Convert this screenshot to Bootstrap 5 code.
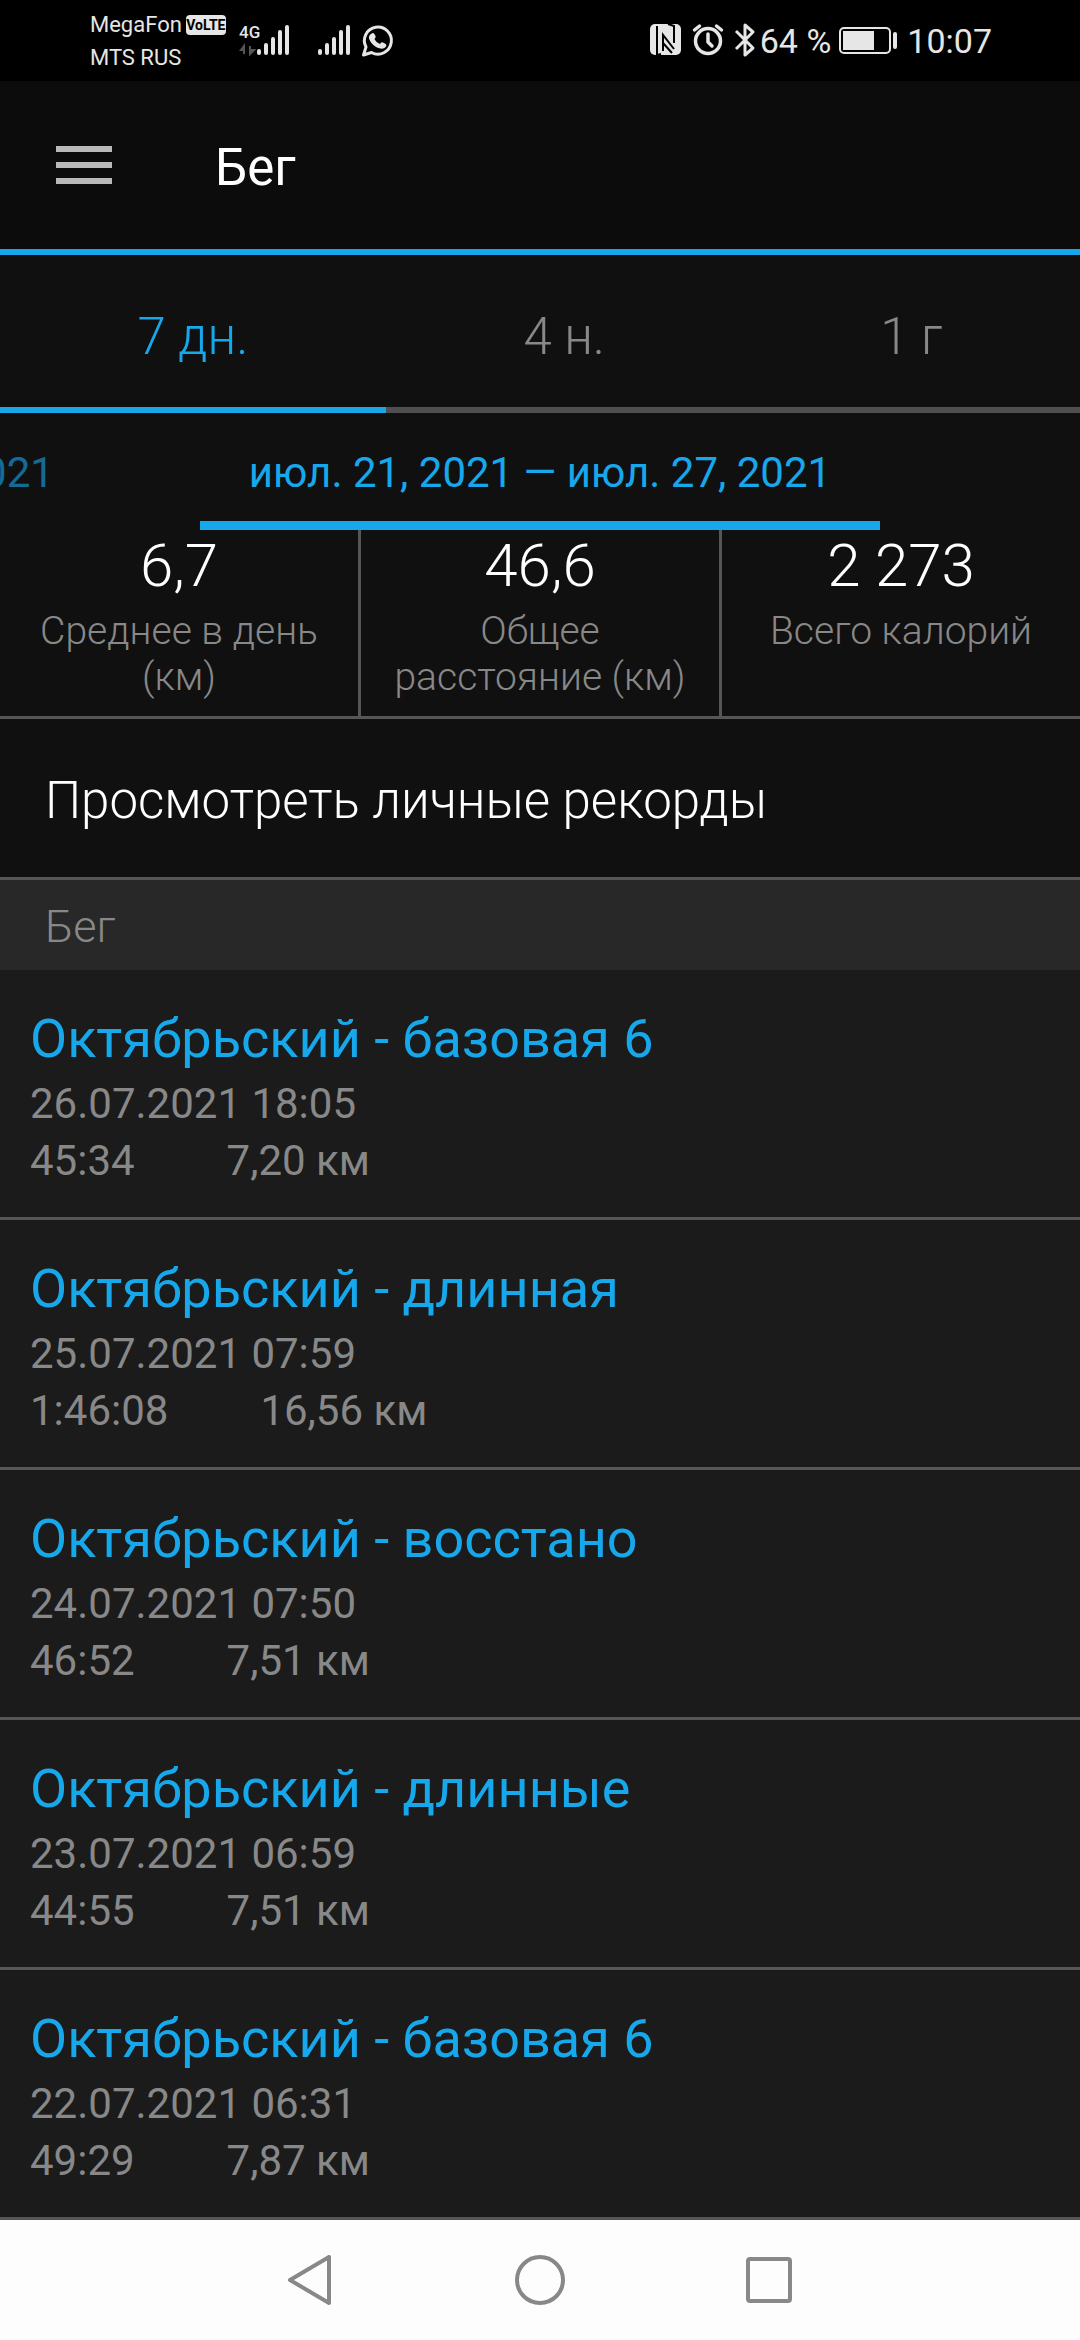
<!DOCTYPE html>
<html lang="ru">
<head>
<meta charset="utf-8">
<meta name="viewport" content="width=device-width, initial-scale=1">
<title>Бег</title>
<link href="https://cdn.jsdelivr.net/npm/bootstrap@5.3.0/dist/css/bootstrap.min.css" rel="stylesheet">
<style>
:root { --accent: #17a8ec; --rule: #565656; --muted: #888; }
body { font-family: Roboto, "Noto Sans", sans-serif; background: #101010; color: #fff; }
svg { display: block; flex: none; }
button { color: inherit; font: inherit; }
.status-bar { height: 81px; background: #000; color: #e6e6e6; }
.status-left { padding-left: 90px; }
.status-right { padding-right: 88px; }
.carriers { font-size: 22px; line-height: 33px; }
.status-num { font-size: 34px; line-height: 82px; }
.volte { background: #e6e6e6; color: #000; font-size: 14px; line-height: 20px; border-radius: 4px; width: 40px; font-weight: 700; }
.app-header { height: 174px; background: #0c0c0c; border-bottom: 6px solid var(--accent); padding-left: 56px; }
.app-title { font-size: 51px; line-height: 60px; font-weight: 400; margin-left: 103px; padding-top: 6px; }
.range-tab { font-weight: 300; font-size: 51px; line-height: 140px; padding: 12px 0 0; color: var(--muted); background: none; border: 0; border-bottom: 6px solid #4f4f4f; }
.range-tab.active { color: var(--accent); border-color: var(--accent); }
.period { font-size: 42px; color: var(--accent); line-height: 96px; white-space: nowrap; }
.period-side { flex: 1 1 0; min-width: 0; padding-top: 12px; }
.period-prev { opacity: .6; margin-right: 146px; }
.period-now { border-bottom: 9px solid var(--accent); padding: 12px 49px 0; }
.stats { border-bottom: 3px solid var(--rule); font-weight: 300; }
.stat { flex: 1 1 0; min-height: 186px; padding: 0 12px; }
.stat + .stat { border-left: 3px solid var(--rule); }
.stat-value { font-size: 60px; line-height: 72px; }
.stat-label { font-size: 39px; line-height: 46px; color: var(--muted); margin-top: 6px; }
.records { font-weight: 300; font-size: 51px; line-height: 152px; padding: 6px 45px 0; border-bottom: 3px solid var(--rule); color: #fff; }
.section-head { font-weight: 300; font-size: 45px; line-height: 86px; padding: 4px 45px 0; background: #282828; color: var(--muted); }
.run { background: #1b1b1b; color: var(--muted); border-bottom: 3px solid var(--rule); padding: 36px 30px 28px; font-size: 42px; line-height: 57px; }
.run-title { font-size: 54px; line-height: 66px; font-weight: 400; color: var(--accent); margin-bottom: 3px; }
.run-data { gap: 92px; }
.nav-keys { background: #fdfdfd; height: 120px; gap: 179px; }
</style>
</head>
<body>
<header class="status-bar d-flex justify-content-between">
  <div class="status-left d-flex">
    <div class="carriers pt-2">
      <div class="d-flex align-items-center"><span>MegaFon</span><span class="volte text-center ms-1">VoLTE</span></div>
      <div>MTS RUS</div>
    </div>
    <svg class="ms-2" width="170" height="81" viewBox="233 0 170 81" role="img" aria-label="Сигнал сети">
      <text x="238" y="38" font-size="17" font-weight="500" fill="#e6e6e6" font-family="Roboto, sans-serif">4G</text>
      <path d="M243 54V46l-3 4h3M249 46v8l4-4h-4" fill="#555" stroke="#555" stroke-width="2"/>
      <g stroke="#e6e6e6" stroke-width="4" stroke-linecap="round">
        <path d="M258 51v2M265 45v8M272 39v14M279 32v21M286 27v26"/>
        <path d="M319 51v2M326 45v8M333 39v14M340 32v21M347 27v26"/>
      </g>
      <path d="M362.500 55l2.500-8a13.500 13.500 0 1 1 5.500 5.500z" fill="none" stroke="#e6e6e6" stroke-width="3" stroke-linejoin="round"/>
      <path d="M370 34c2-2 3-1 4 1s1 2-.5 4c1 2 3 4 5.500 5 1.500-2 2-2 4-1s3 1.500 2 3.500c-2 3-6 2.500-9 1-4-2-7-6-8-9-.500-2 .5-3.500 2-4.500z" fill="#e6e6e6"/>
    </svg>
  </div>
  <div class="status-right d-flex align-items-center">
    <svg width="112" height="81" viewBox="648 0 112 81" role="img" aria-label="NFC, будильник, Bluetooth">
      <rect x="650" y="24" width="31" height="31" rx="5" fill="#e6e6e6"/>
      <path d="M657 26v29l4-1M663 51V35l11 14M663 43l9 10M668 24l6 2v17" stroke="#000" stroke-width="2" fill="none"/>
      <g fill="none" stroke="#e6e6e6" stroke-width="3.500" stroke-linecap="round">
        <circle cx="708" cy="41" r="12.500"/><path d="M708 34v8l4 4M694.500 30l5-4M721.500 30l-5-4"/>
      </g>
      <path d="M736 31l17 17-8 7V25l8 7-17 17" fill="none" stroke="#e6e6e6" stroke-width="3" stroke-linejoin="round"/>
    </svg>
    <span class="status-num">64 %</span>
    <svg class="ms-2 me-2" width="60" height="27" viewBox="0 0 60 27" role="img" aria-label="Батарея">
      <rect x="1" y="1" width="50" height="25" rx="4" fill="none" stroke="#e6e6e6" stroke-width="2"/>
      <rect x="4" y="4" width="31" height="19" fill="#e6e6e6"/><rect x="54" y="5" width="4" height="17" rx="2" fill="#e6e6e6"/>
    </svg>
    <span class="status-num">10:07</span>
  </div>
</header>

<div class="app-header d-flex align-items-center">
  <button class="btn p-0 border-0 rounded-0" type="button" aria-label="Меню">
    <svg width="56" height="38" viewBox="0 0 56 38" fill="#b9b9b9"><path d="M0 0h56v6H0zM0 16h56v6H0zM0 32h56v6H0z"/></svg>
  </button>
  <h1 class="app-title mb-0">Бег</h1>
</div>

<nav class="d-flex">
  <button class="range-tab active flex-fill" type="button">7 дн.</button>
  <button class="range-tab flex-fill" type="button">4 н.</button>
  <button class="range-tab flex-fill" type="button">1 г</button>
</nav>

<div class="period d-flex overflow-hidden">
  <div class="period-side d-flex justify-content-end"><span class="period-prev">2021</span></div>
  <div class="period-now">июл. 21, 2021 — июл. 27, 2021</div>
  <div class="period-side"></div>
</div>

<section class="stats d-flex text-center">
  <div class="stat"><div class="stat-value">6,7</div><div class="stat-label">Среднее в день (км)</div></div>
  <div class="stat"><div class="stat-value">46,6</div><div class="stat-label">Общее расстояние (км)</div></div>
  <div class="stat"><div class="stat-value">2 273</div><div class="stat-label">Всего калорий</div></div>
</section>

<a class="records d-block text-decoration-none" href="#">Просмотреть личные рекорды</a>
<h2 class="section-head mb-0">Бег</h2>

<main>
  <article class="run"><h3 class="run-title">Октябрьский - базовая 6</h3><div>26.07.2021 18:05</div><div class="run-data d-flex"><span>45:34</span><span>7,20 км</span></div></article>
  <article class="run"><h3 class="run-title">Октябрьский - длинная</h3><div>25.07.2021 07:59</div><div class="run-data d-flex"><span>1:46:08</span><span>16,56 км</span></div></article>
  <article class="run"><h3 class="run-title">Октябрьский - восстано</h3><div>24.07.2021 07:50</div><div class="run-data d-flex"><span>46:52</span><span>7,51 км</span></div></article>
  <article class="run"><h3 class="run-title">Октябрьский - длинные</h3><div>23.07.2021 06:59</div><div class="run-data d-flex"><span>44:55</span><span>7,51 км</span></div></article>
  <article class="run"><h3 class="run-title">Октябрьский - базовая 6</h3><div>22.07.2021 06:31</div><div class="run-data d-flex"><span>49:29</span><span>7,87 км</span></div></article>
</main>

<footer class="nav-keys d-flex justify-content-center align-items-center">
  <button class="btn p-0 border-0" type="button" aria-label="Назад"><svg width="50" height="50" viewBox="0 0 50 50" fill="none" stroke="#888" stroke-width="4" stroke-linejoin="round"><path d="M43 2v46L4 25z"/></svg></button>
  <button class="btn p-0 border-0" type="button" aria-label="Домой"><svg width="50" height="50" viewBox="0 0 50 50" fill="none" stroke="#888" stroke-width="4"><circle cx="25" cy="25" r="23"/></svg></button>
  <button class="btn p-0 border-0" type="button" aria-label="Недавние"><svg width="50" height="50" viewBox="0 0 50 50" fill="none" stroke="#888" stroke-width="4"><rect x="4" y="4" width="42" height="42" rx="2"/></svg></button>
</footer>
<script src="https://cdn.jsdelivr.net/npm/bootstrap@5.3.0/dist/js/bootstrap.bundle.min.js"></script>
</body>
</html>
